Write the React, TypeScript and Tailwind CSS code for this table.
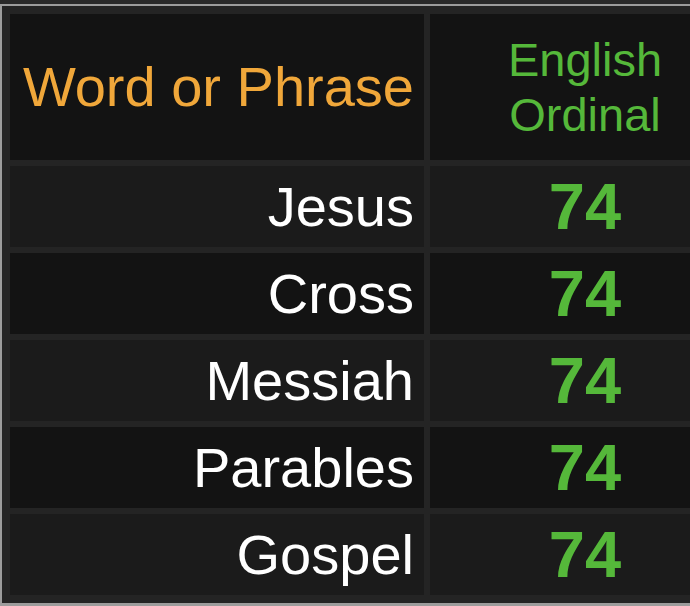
const rows = [
  { word: 'Jesus', value: 74 },
  { word: 'Cross', value: 74 },
  { word: 'Messiah', value: 74 },
  { word: 'Parables', value: 74 },
  { word: 'Gospel', value: 74 },
]

export default function App() {
  return (
    <div className="w-[690px] h-[606px] overflow-hidden bg-[#292929] pt-1 font-['Liberation_Sans',Arial,sans-serif]">
      <div className="w-[760px] border-t-2 border-l-2 border-b-[3px] border-[#9c9c9c] bg-[#242424] pl-2 pt-2 pb-2">
        <div className="grid grid-cols-[414px_310px] gap-[6px]">
          <div className="h-[146px] bg-[#131313] flex items-center justify-end pr-[10px]">
            <span className="text-[56px] leading-none text-[#f0a73a]">Word or Phrase</span>
          </div>
          <div className="h-[146px] bg-[#131313] flex items-center justify-center">
            <span className="text-[47px] leading-[55px] text-[#55b83a] text-center">
              English
              <br />
              Ordinal
            </span>
          </div>
          {rows.map((row, i) => {
            const bg = i % 2 === 0 ? 'bg-[#1b1b1b]' : 'bg-[#131313]'
            return [
              <div key={row.word} className={`h-[81px] ${bg} flex items-center justify-end pr-[10px]`}>
                <span className="text-[56px] leading-none text-white">{row.word}</span>
              </div>,
              <div key={row.word + '-v'} className={`h-[81px] ${bg} flex items-center justify-center`}>
                <span className="text-[65px] leading-none font-bold text-[#55b83a]">{row.value}</span>
              </div>,
            ]
          })}
        </div>
      </div>
    </div>
  )
}
